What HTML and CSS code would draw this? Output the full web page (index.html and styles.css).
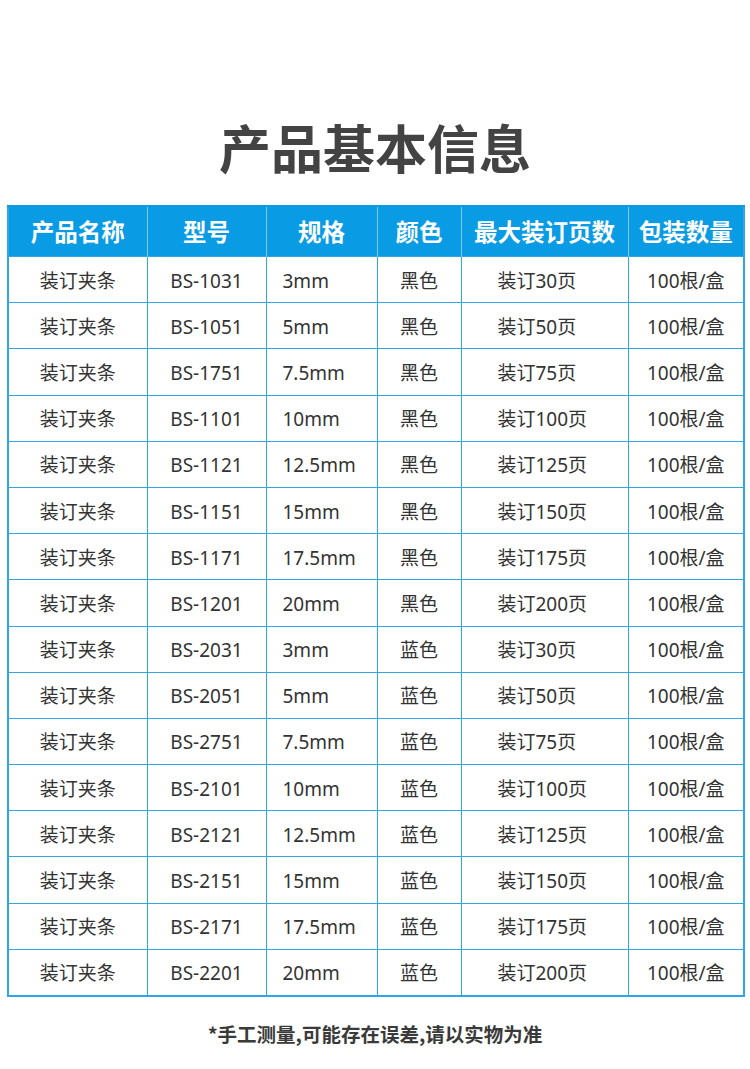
FILE: index.html
```html
<!DOCTYPE html>
<html lang="zh">
<head>
<meta charset="utf-8">
<link rel="stylesheet" href="styles.css">
</head>
<body>
<div class="page">
  <h1 class="title">产品基本信息</h1>
  <table class="spec">
    <colgroup>
      <col class="c1"><col class="c2"><col class="c3"><col class="c4"><col class="c5"><col class="c6">
    </colgroup>
    <thead>
      <tr><th>产品名称</th><th>型号</th><th>规格</th><th>颜色</th><th>最大装订页数</th><th>包装数量</th></tr>
    </thead>
    <tbody>
      <tr><td>装订夹条</td><td>BS-1031</td><td class="l">3mm</td><td>黑色</td><td class="p">装订30页</td><td>100根/盒</td></tr>
      <tr><td>装订夹条</td><td>BS-1051</td><td class="l">5mm</td><td>黑色</td><td class="p">装订50页</td><td>100根/盒</td></tr>
      <tr><td>装订夹条</td><td>BS-1751</td><td class="l">7.5mm</td><td>黑色</td><td class="p">装订75页</td><td>100根/盒</td></tr>
      <tr><td>装订夹条</td><td>BS-1101</td><td class="l">10mm</td><td>黑色</td><td class="p">装订100页</td><td>100根/盒</td></tr>
      <tr><td>装订夹条</td><td>BS-1121</td><td class="l">12.5mm</td><td>黑色</td><td class="p">装订125页</td><td>100根/盒</td></tr>
      <tr><td>装订夹条</td><td>BS-1151</td><td class="l">15mm</td><td>黑色</td><td class="p">装订150页</td><td>100根/盒</td></tr>
      <tr><td>装订夹条</td><td>BS-1171</td><td class="l">17.5mm</td><td>黑色</td><td class="p">装订175页</td><td>100根/盒</td></tr>
      <tr><td>装订夹条</td><td>BS-1201</td><td class="l">20mm</td><td>黑色</td><td class="p">装订200页</td><td>100根/盒</td></tr>
      <tr><td>装订夹条</td><td>BS-2031</td><td class="l">3mm</td><td>蓝色</td><td class="p">装订30页</td><td>100根/盒</td></tr>
      <tr><td>装订夹条</td><td>BS-2051</td><td class="l">5mm</td><td>蓝色</td><td class="p">装订50页</td><td>100根/盒</td></tr>
      <tr><td>装订夹条</td><td>BS-2751</td><td class="l">7.5mm</td><td>蓝色</td><td class="p">装订75页</td><td>100根/盒</td></tr>
      <tr><td>装订夹条</td><td>BS-2101</td><td class="l">10mm</td><td>蓝色</td><td class="p">装订100页</td><td>100根/盒</td></tr>
      <tr><td>装订夹条</td><td>BS-2121</td><td class="l">12.5mm</td><td>蓝色</td><td class="p">装订125页</td><td>100根/盒</td></tr>
      <tr><td>装订夹条</td><td>BS-2151</td><td class="l">15mm</td><td>蓝色</td><td class="p">装订150页</td><td>100根/盒</td></tr>
      <tr><td>装订夹条</td><td>BS-2171</td><td class="l">17.5mm</td><td>蓝色</td><td class="p">装订175页</td><td>100根/盒</td></tr>
      <tr><td>装订夹条</td><td>BS-2201</td><td class="l">20mm</td><td>蓝色</td><td class="p">装订200页</td><td>100根/盒</td></tr>
    </tbody>
  </table>
  <p class="note">*手工测量,可能存在误差,请以实物为准</p>
</div>
</body>
</html>
```

FILE: styles.css
```css
html, body {
  margin: 0;
  padding: 0;
  background: #ffffff;
}
body {
  font-family: "Noto Sans CJK SC", "Noto Sans", sans-serif;
  color: #333333;
}
.page {
  width: 750px;
  padding-top: 113px;
}
.title {
  margin: 0;
  height: 92px;
  font-size: 52px;
  line-height: 68px;
  font-weight: 700;
  color: #434343;
  text-align: center;
}
.spec {
  margin-left: 7px;
  width: 736px;
  table-layout: fixed;
  border-collapse: collapse;
  border: 2px solid #2ea6e8;
}
.c1 { width: 139px; }
.c2 { width: 119px; }
.c3 { width: 111px; }
.c4 { width: 84px; }
.c5 { width: 167px; }
.c6 { width: 116px; }
.spec th {
  background: #0a9be5;
  color: #ffffff;
  font-size: 23.5px;
  font-weight: 700;
  height: 49px;
  padding: 0;
  border-left: 1px solid #7fcaf3;
  border-right: 1px solid #7fcaf3;
  border-top: 2px solid #0a9be5;
  line-height: 1;
}
.spec td {
  height: 42.2px;
  padding: 3px 0 0;
  border: 1px solid #2ea6e8;
  text-align: center;
  font-family: "Noto Sans", "Noto Sans CJK SC", sans-serif;
  font-size: 19px;
  color: #333333;
  line-height: 1;
}
.spec td.l {
  text-align: left;
  padding-left: 16px;
}
.spec td.p {
  text-align: left;
  padding-left: 36px;
}
.note {
  margin: 22px 0 0;
  text-align: center;
  font-size: 19.5px;
  font-weight: 700;
  color: #3a3a3a;
}
```
